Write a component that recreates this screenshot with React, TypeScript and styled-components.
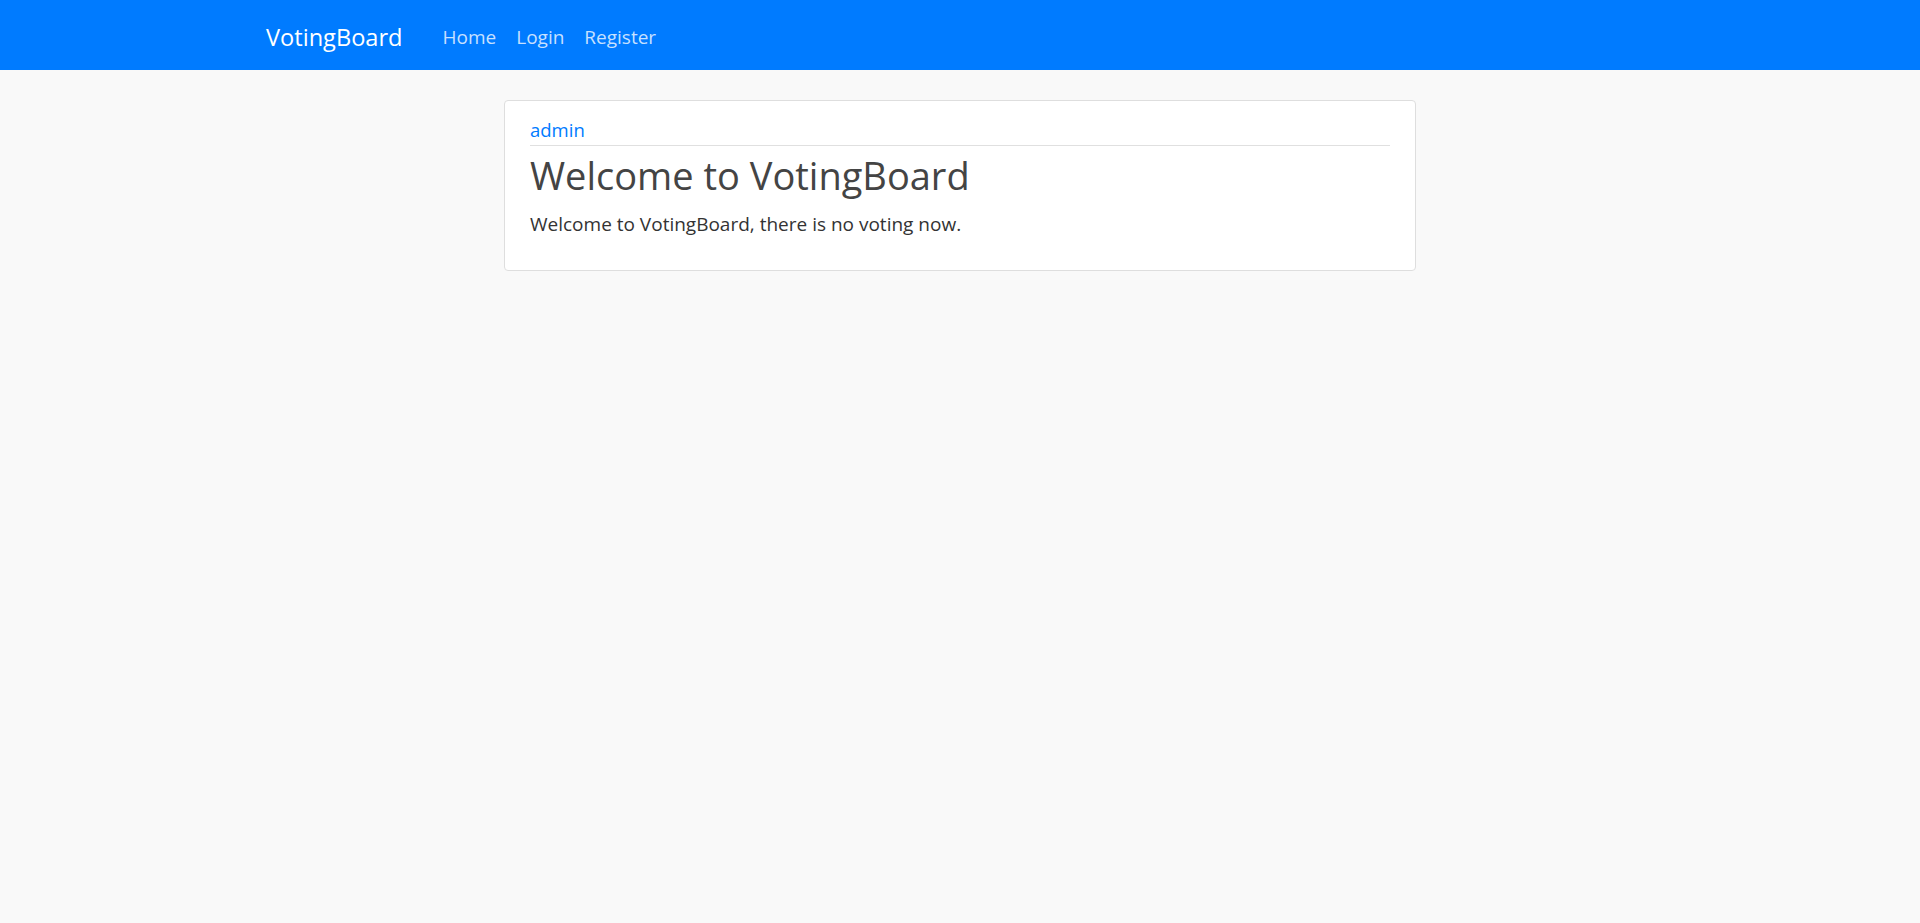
import styled, { createGlobalStyle } from 'styled-components';

const GlobalStyle = createGlobalStyle`
  html, body {
    margin: 0;
    padding: 0;
    background: #f9f9f9;
    font-family: 'Open Sans', 'Noto Sans', sans-serif;
    color: #333;
  }
`;

const Navbar = styled.nav`
  background: #007bff;
  height: 70px;
`;

const NavInner = styled.div`
  max-width: 1388px;
  margin: 0 auto;
  height: 100%;
  box-sizing: border-box;
  padding-top: 3px;
  display: flex;
  align-items: center;
`;

const Brand = styled.a`
  color: #fff;
  font-size: 23.6px;
  text-decoration: none;
  margin-right: 40px;
`;

const NavLink = styled.a`
  color: rgba(255, 255, 255, 0.78);
  font-size: 19px;
  text-decoration: none;
  margin-right: 20px;
`;

const Main = styled.main`
  padding-top: 30px;
  display: flex;
  justify-content: center;
`;

const Card = styled.section`
  width: 912px;
  box-sizing: border-box;
  background: #fff;
  border: 1px solid #dedede;
  border-radius: 4px;
  padding: 16px 25px 33px;
`;

const Author = styled.a`
  display: block;
  color: #007bff;
  font-size: 18.5px;
  line-height: 26px;
  text-decoration: none;
  padding-bottom: 2px;
  border-bottom: 1px solid #e0e0e0;
`;

const Title = styled.h1`
  margin: 3px 0 10px;
  font-size: 38px;
  font-weight: 400;
  color: #444;
  line-height: 52px;
`;

const Body = styled.p`
  margin: 0;
  font-size: 19px;
  line-height: 26px;
  color: #333;
`;

export default function App() {
  return (
    <>
      <GlobalStyle />
      <Navbar>
        <NavInner>
          <Brand href="#">VotingBoard</Brand>
          <NavLink href="#">Home</NavLink>
          <NavLink href="#">Login</NavLink>
          <NavLink href="#">Register</NavLink>
        </NavInner>
      </Navbar>
      <Main>
        <Card>
          <Author href="#">admin</Author>
          <Title>Welcome to VotingBoard</Title>
          <Body>Welcome to VotingBoard, there is no voting now.</Body>
        </Card>
      </Main>
    </>
  );
}
